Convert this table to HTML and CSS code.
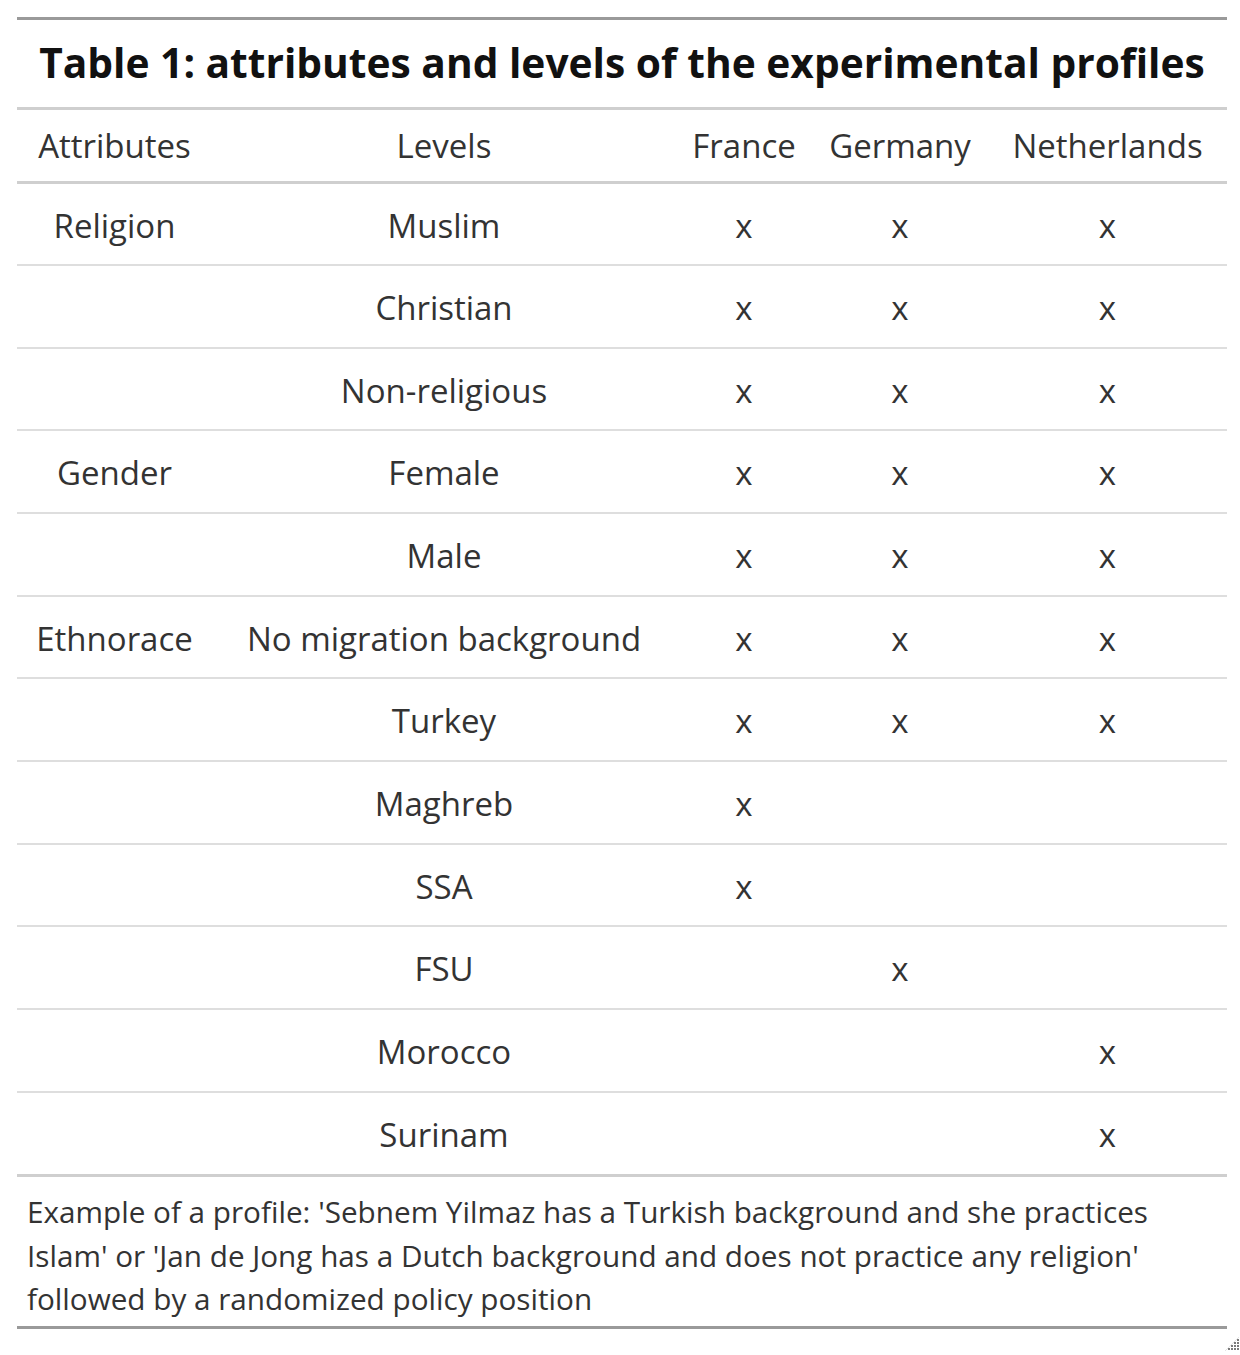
FILE: index.html
```html
<!DOCTYPE html>
<html>
<head>
<meta charset="utf-8">
<link rel="stylesheet" href="styles.css">
</head>
<body>
<div class="frame">
  <div class="title">Table 1: attributes and levels of the experimental profiles</div>
  <table class="grid">
    <colgroup>
      <col class="c1"><col class="c2"><col class="c3"><col class="c4"><col class="c5">
    </colgroup>
    <thead>
      <tr><th>Attributes</th><th>Levels</th><th>France</th><th>Germany</th><th>Netherlands</th></tr>
    </thead>
    <tbody>
      <tr><td>Religion</td><td>Muslim</td><td>x</td><td>x</td><td>x</td></tr>
      <tr><td></td><td>Christian</td><td>x</td><td>x</td><td>x</td></tr>
      <tr><td></td><td>Non-religious</td><td>x</td><td>x</td><td>x</td></tr>
      <tr><td>Gender</td><td>Female</td><td>x</td><td>x</td><td>x</td></tr>
      <tr><td></td><td>Male</td><td>x</td><td>x</td><td>x</td></tr>
      <tr><td>Ethnorace</td><td>No migration background</td><td>x</td><td>x</td><td>x</td></tr>
      <tr><td></td><td>Turkey</td><td>x</td><td>x</td><td>x</td></tr>
      <tr><td></td><td>Maghreb</td><td>x</td><td></td><td></td></tr>
      <tr><td></td><td>SSA</td><td>x</td><td></td><td></td></tr>
      <tr><td></td><td>FSU</td><td></td><td>x</td><td></td></tr>
      <tr><td></td><td>Morocco</td><td></td><td></td><td>x</td></tr>
      <tr><td></td><td>Surinam</td><td></td><td></td><td>x</td></tr>
    </tbody>
  </table>
  <div class="note">Example of a profile: 'Sebnem Yilmaz has a Turkish background and she practices Islam' or 'Jan de Jong has a Dutch background and does not practice any religion' followed by a randomized policy position</div>
</div>
<div class="grip-row">
  <svg class="grip" width="18" height="18" viewBox="0 0 18 18">
    <path d="M17 3 L3 17" stroke="#e4e4e4" stroke-width="1"/>
    <g fill="#7a7a7a">
      <rect x="15" y="5" width="2" height="2"/>
      <rect x="12" y="8" width="2" height="2"/><rect x="15" y="8" width="2" height="2"/>
      <rect x="9" y="11" width="2" height="2"/><rect x="12" y="11" width="2" height="2"/><rect x="15" y="11" width="2" height="2"/>
      <rect x="6" y="14" width="2" height="2"/><rect x="9" y="14" width="2" height="2"/><rect x="12" y="14" width="2" height="2"/><rect x="15" y="14" width="2" height="2"/>
    </g>
  </svg>
</div>
</body>
</html>
```

FILE: styles.css
```css
html, body {
  margin: 0;
  padding: 0;
  background: #ffffff;
}
body {
  width: 1240px;
  font-family: "Open Sans", "Noto Sans", sans-serif;
  color: #333333;
}
.frame {
  width: 1210px;
  margin: 17px 0 0 17px;
  border-top: 3px solid #9a9a9a;
  border-bottom: 3px solid #9a9a9a;
}
.title {
  height: 90px;
  padding-bottom: 3px;
  box-sizing: border-box;
  display: flex;
  align-items: center;
  justify-content: center;
  font-weight: 700;
  font-size: 40.7px;
  color: #111111;
  border-bottom: 3px solid #cfcfcf;
  white-space: nowrap;
}
.grid {
  width: 1210px;
  border-collapse: collapse;
  table-layout: fixed;
}
.c1 { width: 195px; }
.c2 { width: 464px; }
.c3 { width: 136px; }
.c4 { width: 176px; }
.c5 { width: 239px; }
.grid th, .grid td {
  text-align: center;
  font-weight: 400;
  font-size: 33px;
  line-height: 40px;
  padding: 0;
  white-space: nowrap;
}
.grid th {
  height: 71px;
  border-bottom: 3px solid #cfcfcf;
}
.grid td {
  height: 82.67px;
  padding-top: 3px;
  box-sizing: border-box;
  border-bottom: 2px solid #dedede;
}
.grid tbody tr:last-child td {
  border-bottom: none;
}
.note {
  border-top: 3px solid #cfcfcf;
  padding: 13px 40px 5px 10px;
  font-size: 29.7px;
  line-height: 43.5px;
  color: #333333;
}
.grip-row {
  display: flex;
  justify-content: flex-end;
  padding-top: 5px;
}
.grip {
  display: block;
}
```
